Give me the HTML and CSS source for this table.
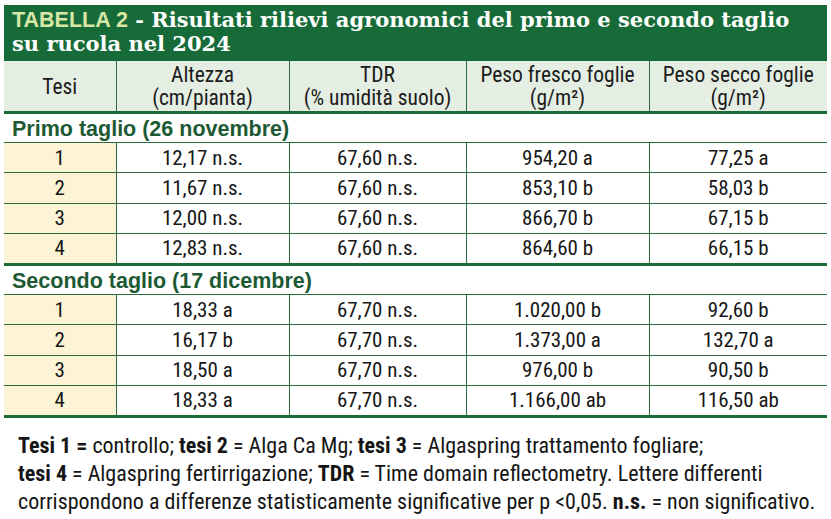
FILE: index.html
```html
<!DOCTYPE html>
<html lang="it">
<head>
<meta charset="utf-8">
<title>Tabella 2</title>
<link rel="stylesheet" href="styles.css">
</head>
<body>
<div class="card">
  <div class="title"><span class="tag">TABELLA 2</span><span class="serif"> - Risultati rilievi agronomici del primo e secondo taglio<br>su rucola nel 2024</span></div>
  <table class="data">
    <colgroup>
      <col class="c1"><col class="c2"><col class="c3"><col class="c4"><col class="c5">
    </colgroup>
    <thead>
      <tr class="head">
        <th>Tesi</th>
        <th>Altezza<br>(cm/pianta)</th>
        <th>TDR<br>(% umidità suolo)</th>
        <th>Peso fresco foglie<br>(g/m²)</th>
        <th>Peso secco foglie<br>(g/m²)</th>
      </tr>
    </thead>
    <tbody>
      <tr class="section"><td colspan="5">Primo taglio (26 novembre)</td></tr>
      <tr><td class="tesi">1</td><td>12,17 n.s.</td><td>67,60 n.s.</td><td>954,20 a</td><td>77,25 a</td></tr>
      <tr><td class="tesi">2</td><td>11,67 n.s.</td><td>67,60 n.s.</td><td>853,10 b</td><td>58,03 b</td></tr>
      <tr><td class="tesi">3</td><td>12,00 n.s.</td><td>67,60 n.s.</td><td>866,70 b</td><td>67,15 b</td></tr>
      <tr class="last"><td class="tesi">4</td><td>12,83 n.s.</td><td>67,60 n.s.</td><td>864,60 b</td><td>66,15 b</td></tr>
      <tr class="section"><td colspan="5">Secondo taglio (17 dicembre)</td></tr>
      <tr><td class="tesi">1</td><td>18,33 a</td><td>67,70 n.s.</td><td>1.020,00 b</td><td>92,60 b</td></tr>
      <tr><td class="tesi">2</td><td>16,17 b</td><td>67,70 n.s.</td><td>1.373,00 a</td><td>132,70 a</td></tr>
      <tr><td class="tesi">3</td><td>18,50 a</td><td>67,70 n.s.</td><td>976,00 b</td><td>90,50 b</td></tr>
      <tr class="last"><td class="tesi">4</td><td>18,33 a</td><td>67,70 n.s.</td><td>1.166,00 ab</td><td>116,50 ab</td></tr>
    </tbody>
  </table>
  <p class="note"><b>Tesi 1 =</b> controllo; <b>tesi 2</b> = Alga Ca Mg; <b>tesi 3</b> = Algaspring trattamento fogliare;<br><b>tesi 4</b> = Algaspring fertirrigazione; <b>TDR</b> = Time domain reflectometry. Lettere differenti<br>corrispondono a differenze statisticamente significative per p &lt;0,05. <b>n.s.</b> = non significativo.</p>
</div>
</body>
</html>
```

FILE: styles.css
```css
html, body {
  margin: 0;
  padding: 0;
  background: #ffffff;
}

.card {
  padding: 5px 4px 0 4px;
  width: 823px;
  font-family: "Roboto", "Liberation Sans", Arial, sans-serif;
  font-stretch: 75%;
  color: #161616;
}

.title {
  background: #176b39;
  height: 56px;
  box-sizing: border-box;
  padding: 3px 0 0 8px;
  line-height: 24px;
  font-size: 21px;
  white-space: nowrap;
}

.tag {
  font-family: "Liberation Sans", Arial, sans-serif;
  font-stretch: 100%;
  font-weight: bold;
  color: #d9e7a6;
  font-size: 21.5px;
}

.serif {
  font-family: "DejaVu Serif", "Liberation Serif", serif;
  font-stretch: 100%;
  font-weight: bold;
  color: #ffffff;
  font-size: 21px;
}

.data {
  width: 823px;
  border-collapse: collapse;
  table-layout: fixed;
  font-size: 21px;
}

.c1 { width: 112px; }
.c2 { width: 173px; }
.c3 { width: 177px; }
.c4 { width: 183px; }
.c5 { width: 178px; }

.head th {
  background: #e5eee3;
  font-weight: normal;
  font-size: 21.5px;
  height: 50px;
  padding: 0;
  line-height: 23px;
  color: #1b1b1b;
  border-left: 1px solid #2d6a40;
  border-bottom: 3px solid #1c6a38;
  vertical-align: middle;
}

.head th:first-child {
  border-left: none;
}

.data td {
  height: 29.25px;
  padding: 0;
  text-align: center;
  line-height: 24px;
  border-left: 1px solid #2d6a40;
  border-top: 1px solid #2d6a40;
}

.data td:first-child {
  border-left: none;
}

.data td.tesi {
  background: #fcf4d5;
}

.data tr.section td {
  text-align: left;
  vertical-align: bottom;
  font-family: "Liberation Sans", Arial, sans-serif;
  font-stretch: 100%;
  font-weight: bold;
  color: #1d5a34;
  font-size: 21.5px;
  padding: 0 0 1px 8px;
  height: 27px;
  border-top: none;
  background: #ffffff;
}

.data tr.last td {
  border-bottom: 3px solid #1c6a38;
}

.note {
  margin: 14px 0 0 14px;
  font-size: 22px;
  line-height: 28px;
  color: #151515;
  white-space: nowrap;
}

.note b {
  font-weight: bold;
}
```
